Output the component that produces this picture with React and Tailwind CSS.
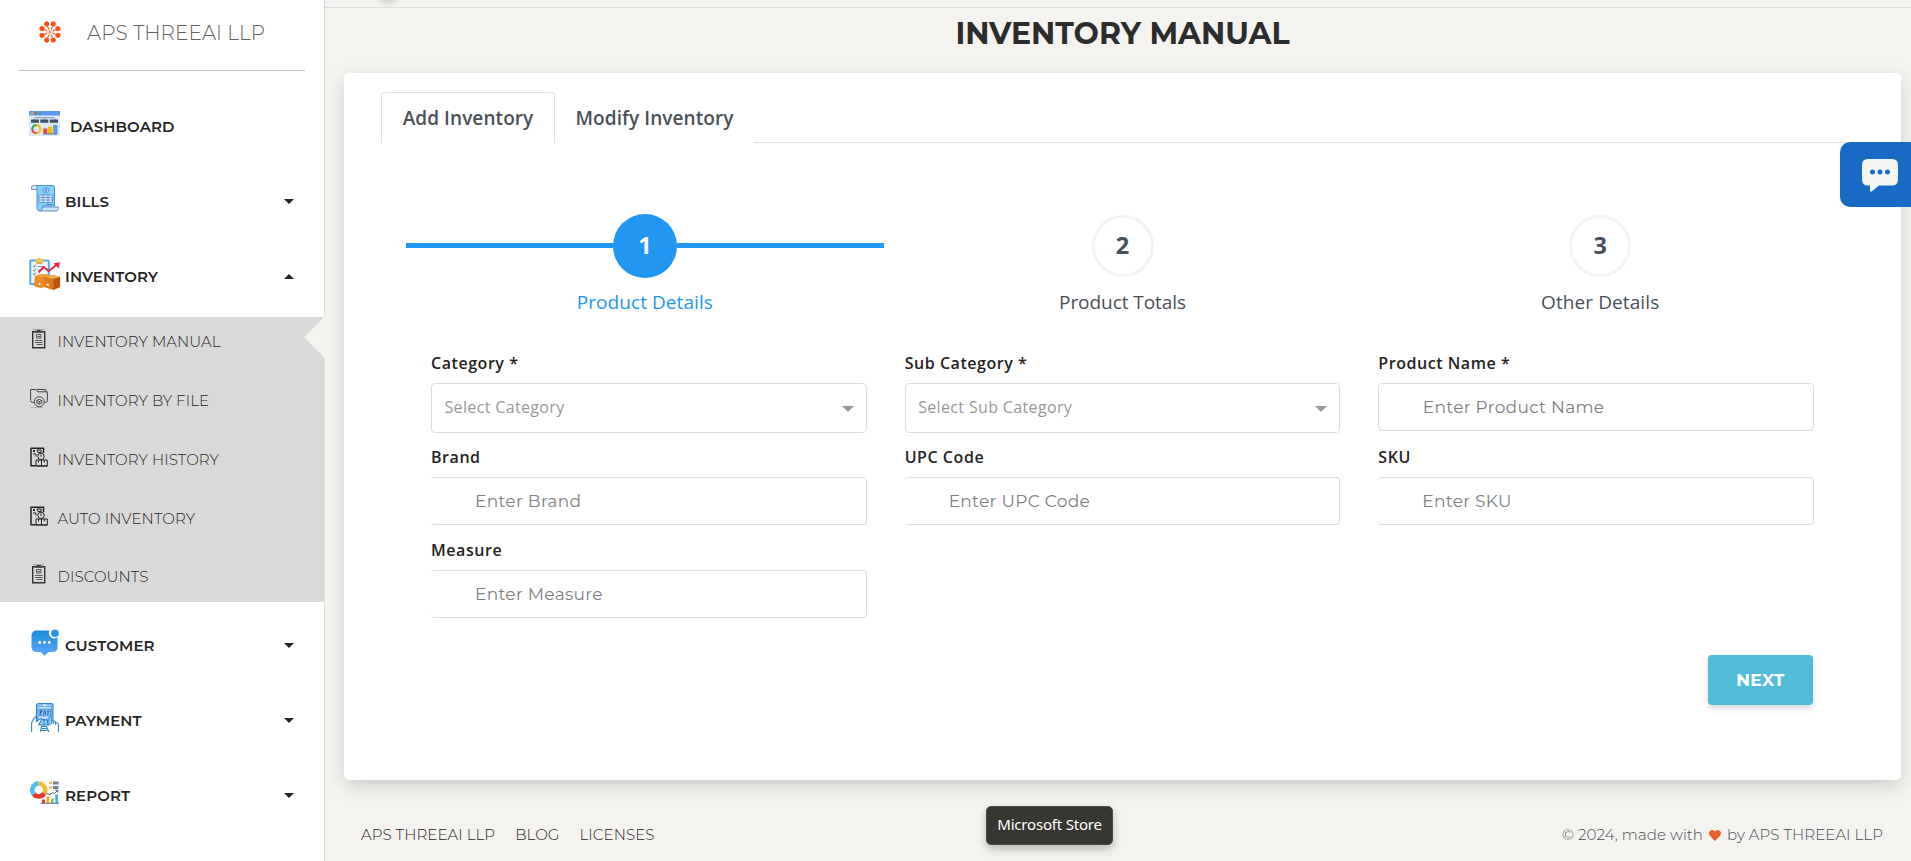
import React from "react";

const MONT = "font-['Montserrat','Inter',sans-serif]";
const TREB = "font-['Trebuchet_MS','Open_Sans',sans-serif]";

function Logo() {
  const dots = [22.5, 67.5, 112.5, 157.5, 202.5, 247.5, 292.5, 337.5];
  return (
    <svg viewBox="-11 -11 22 22" className="size-[22px] shrink-0" fill="#fb4f14" stroke="#fb4f14">
      {dots.map((a) => (
        <g key={a} transform={`rotate(${a})`}>
          <circle cx="8.700" cy="0" r="2.500" stroke="none" />
          <path d="M4.500 0h3" strokeWidth="1" />
          <circle cx="3.900" cy="0" r="0.8" stroke="none" />
        </g>
      ))}
      <circle r="2.100" fill="none" strokeWidth=".8" strokeDasharray="1 .65" />
      <circle r="0.9" stroke="none" />
    </svg>
  );
}

function DashboardIcon() {
  return (
    <svg viewBox="0 0 31 25" className="h-[25px] w-[31px]">
      <path fill="#deebfb" d="M0 0h31v25H0z" />
      <path fill="#5b98ee" d="M0 0h31v4.500H0z" />
      <circle cx="3.300" cy="2.300" r="1.100" fill="#fbbc05" />
      <circle cx="7" cy="2.300" r="1.100" fill="#ea4335" />
      <circle cx="10.700" cy="2.300" r="1.100" fill="#34a853" />
      <path fill="#8fa0ae" d="M6 6h19v1.300H6zM4.500 7.300h1.500v1.500H4.500zM15 7h1v2h-1zM25 7.300h1.500v1.500H25z" />
      <path fill="#3d5263" d="M2 8.500h8v3.300H2zM11.300 8.500h8v3.300h-8zM20.700 8.500h8.300v3.300h-8.300z" />
      <g fill="none" strokeWidth="2.200">
        <path stroke="#fbbc05" d="M7.300 14.200a4 4 0 0 1 4 4" />
        <path stroke="#fbbc05" d="M11.300 18.200a4 4 0 0 1-4 4" />
        <path stroke="#ea4335" d="M7.300 22.200a4 4 0 0 1-4-4" />
        <path stroke="#34a853" d="M3.300 18.200a4 4 0 0 1 4-4" />
      </g>
      <path fill="#ea4335" d="M14.300 17.500h4v5h-4z" />
      <path fill="#fbbc05" d="M19 15.500h4.500v7H19z" />
      <path fill="#5b98ee" d="M24.200 13.800h4.300v8.700h-4.300z" />
      <path fill="#3d5263" d="M14 22.500h14.500v.9H14z" />
    </svg>
  );
}

function BillsIcon() {
  return (
    <svg viewBox="0 0 28 27" className="h-[27px] w-[28px]" strokeLinejoin="round">
      <path fill="#80d4f7" stroke="#4a90d9" d="M4.500.5h17.500q1.500 0 1.500 2V21H12v4.500H8q-2 0-2-2V5z" />
      <path fill="#e3effc" stroke="#5b8fd6" d="M.6 4.500V2.200Q.7.600 2.700.6h2.600q1 .5.700 3.900z" />
      <path fill="#d3e5fa" stroke="#5b8fd6" d="M11.500 22h15.900v1.500q-.2 2.500-2.500 2.500H8.500q3 0 3-4z" />
      <circle cx="14.800" cy="5.300" r="2.900" fill="#a6dcfa" stroke="#4a86cf" strokeWidth=".8" />
      <path stroke="#3f78c4" strokeWidth=".8" d="M14.800 3.500v3.600M13.800 4.500h2M13.800 6h2" />
      <path fill="#dcecfb" stroke="#4a86cf" strokeWidth=".8" d="M7.800 10h13.900v7.600H7.800zM7.800 12.500h13.900M7.800 15h13.900M12.200 10v7.600M17 10v7.600" />
      <path stroke="#4a86cf" d="M15.500 19.500h6" />
    </svg>
  );
}

function InventoryIcon() {
  return (
    <svg viewBox="0 0 31 32" className="h-[32px] w-[31px]">
      <rect x=".3" y="1.500" width="20.500" height="25.500" rx="1.500" fill="#57a9e8" />
      <path fill="#f2f7fc" d="M2.200 3.500h16.600v21.500H2.200z" />
      <path fill="#f3c64e" d="M7 1.500Q10.500-2 14 1.500V5.500H7z" />
      <path fill="#c9952b" d="M8 4.500h5v1.200H8z" />
      <path stroke="#8b98a8" strokeWidth="1.100" d="M4 8l1 1 2-2.300M4 12l1 1 2-2.300M4 16l1 1 2-2.300M8.500 8.500h7M8.500 12h5" fill="none" />
      <path d="M9.500 14.500l5-5.500 5.500 4 8.300-7" fill="none" stroke="#dd2c48" strokeWidth="1.900" />
      <path fill="#dd2c48" d="M24.500 5.500L31 4l-1.500 6.500z" />
      <path fill="#e98a22" d="M6 18l6-2 7 .5v11.500L12 30l-7-2z" />
      <path fill="#f4a73c" d="M6 18l6-2 7 .5-5 2.500z" />
      <path fill="#e07c18" d="M15 18.500l9-1.500 7 2v10L24 32l-9-3z" />
      <path fill="#f6ad48" d="M15 18.500l9-1.500 7 2-6.500 2z" />
      <path fill="#b8560f" d="M24.500 21L31 19v10l-6.500 3z" />
      <path fill="#f5dfc2" d="M9.500 25h2v2h-2zM17.500 25.500l2.500.5v2l-2.500-.500z" />
    </svg>
  );
}

function CustomerIcon() {
  return (
    <svg viewBox="0 0 28 28" className="h-[28px] w-[28px]">
      <defs>
        <linearGradient id="bubble" x1="0" y1="0" x2="0" y2="1">
          <stop offset="0" stopColor="#1c8bdc" />
          <stop offset="1" stopColor="#59a9fb" />
        </linearGradient>
      </defs>
      <path fill="url(#bubble)" d="M6 1.500h12.500a5.500 5.500 0 0 0 8 7V18q0 5-5 5h-4.200L13.500 27l-3.700-4H6q-5.500 0-5.500-5V7Q.5 1.500 6 1.500z" />
      <circle cx="24" cy="4.200" r="3.800" fill="#2a93e6" />
      <g fill="#fff">
        <circle cx="8.700" cy="13.500" r="1.400" />
        <circle cx="13.500" cy="13.500" r="1.400" />
        <circle cx="18.300" cy="13.500" r="1.400" />
      </g>
    </svg>
  );
}

function PaymentIcon() {
  return (
    <svg viewBox="0 0 28 29" className="h-[29px] w-[28px]" fill="none" stroke="#2b87d3" strokeWidth="1.100">
      <path fill="#9cc9f2" d="M5.500 16V2.500Q5.500.600 7.500.6h12.500q2 0 2 1.900V19L18 22H9z" />
      <path fill="#d6e9fb" strokeWidth=".6" d="M7 3.500h13.500V16H7z" />
      <path stroke="#fff" d="M12 2.200h3.500" />
      <path fill="#8cc3f2" strokeWidth=".8" d="M8 6h11.500v7H8z" />
      <path stroke="#1b61a8" strokeWidth=".9" d="M9.500 12V7.500h1.500q.8 1.500-1.500 2.200M12.400 12l1.300-4.500L15 12M15.700 7.500l1.300 2 1.300-2M17 9.500V12" />
      <path fill="#fff" d="M.6 29V21q.4-4.500 4.900-8v6q2-3 4.500-3.500 1 1-1 4l-1.500 3L10.500 24 9.500 29z" stroke="none" />
      <path d="M.6 29V21q.4-4.500 4.900-8v6M5.500 19q2-3 4.500-3.500 1 1-1 4l-1.500 3M10 16.500h3v6M13 17h3.500v5" />
      <path fill="#fff" d="M18 22v-7.500q1.200-1 2 0V20M20 18q1.200-1 2.300 0v3M22.300 18.600q1.200-.8 2.200.3v2.600M24.500 19.600q2.900-.2 2.900 2.400v7" />
      <path d="M9.500 29l1-5.500h5L18 29M10 25.500h6M9.500 27.500h7.500" />
    </svg>
  );
}

function ReportIcon() {
  return (
    <svg viewBox="0 0 29 23" className="h-[23px] w-[29px]">
      <g fill="none" strokeWidth="4.600">
        <path stroke="#f6b93b" d="M8.700 2.500a6.500 6.500 0 0 1 6.500 6.500q0 2-1 3.500" />
        <path stroke="#e5392d" d="M14.200 12.500a6.500 6.500 0 0 1-10.500.5" />
        <path stroke="#4fc1f0" d="M3.700 13a6.500 6.500 0 0 1 5-10.500" />
      </g>
      <path fill="#f6b93b" d="M19.500.5h2.600v2.600h-2.600zM19.500 5h2.600v2.600h-2.600z" />
      <path stroke="#767d99" strokeWidth="1.400" d="M23 1.200h5.500M23 2.800h5.500M23 5.700h5.500M23 7.300h5.500" />
      <path fill="none" stroke="#4b5878" strokeWidth="1" d="M16.500 12.500l3.500 1 2.500-1.700 2 .7 3-3M25.300 9.200h2.400v2.400" />
      <path fill="#e5392d" d="M12 18.500h2.800V22H12z" />
      <path fill="#f6a52d" d="M16.500 15.500h2.800V22h-2.800z" />
      <path fill="#7ac943" d="M21 17.500h2.600V22H21z" />
      <path fill="#3bb4e8" d="M25.300 13.500H28V22h-2.700z" />
      <path fill="#4b5878" d="M10.500 21.800H29v.9H10.500z" />
    </svg>
  );
}

function ClipboardIcon() {
  return (
    <svg viewBox="0 0 17 20" className="h-[20px] w-[17px]" fill="none" stroke="#333">
      <path strokeWidth="1.400" d="M2.700 2.700h12v16.100h-12z" />
      <path stroke="#999" strokeWidth="1" d="M3 .7h11" />
      <path stroke="#444" strokeWidth="1.100" d="M5.800 3.200q.2-1.500 2.900-1.800 2.700.3 2.900 1.800z" />
      <path stroke="#555" strokeWidth="1" d="M6.500 5.500h4.400v3.600H6.500zM7.500 7.500h2.600" />
      <path stroke="#555" strokeWidth="1" d="M4.900 11.500h7.600M4.900 13.500h7.600M6.500 15.500h6" />
    </svg>
  );
}

function FolderIcon() {
  return (
    <svg viewBox="0 0 18 20" className="h-[20px] w-[18px]" fill="none" stroke="#333">
      <path strokeWidth=".9" d="M4 14.500H2.500Q.6 14.300.6 12.500V1.500h5.500l1.500 2.300h9.800v8.700q0 1.800-2 2h-1M7 1.500h8.700v2" />
      <path stroke="#999" strokeWidth=".6" d="M1 19.500h12" />
      <circle cx="9.200" cy="13.700" r="5" strokeWidth=".9" />
      <path strokeWidth=".8" d="M9.200 11.300l2.500 1.200v2.500l-2.500 1.200-2.500-1.200v-2.500zM6.700 12.500l2.500 1.200 2.500-1.200M9.200 13.700v2.500" />
    </svg>
  );
}

function HistoryIcon() {
  return (
    <svg viewBox="0 0 18 20" className="h-[20px] w-[18px]" fill="none" stroke="#222">
      <path strokeWidth="1.500" d="M1 19V1.300M.5 1.300h13V6M.5 18.700H5" />
      <path strokeWidth="1" d="M3 3l2 2M5 3L3 5M3 7h3V9.500M7 3h4v2.500H8z" />
      <circle cx="11" cy="9.300" r="3.200" fill="#d9d9d9" />
      <path d="M11 7.500v2.300M6 19v-6h5.500v6zM11.500 19v-6h5.800v6zM8.500 13v2.500M14.300 13v2.500M5 18.900h12.500" />
    </svg>
  );
}

function Caret({ up }) {
  return (
    <svg viewBox="0 0 10 5" className="h-[5px] w-[10px]" fill="#252422">
      <path d={up ? "M0 5L5 0l5 5z" : "M0 0h10L5 5z"} />
    </svg>
  );
}

function NavItem({ icon, label, caret, gap = "ml-[3px]" }) {
  return (
    <div className="flex h-[75px] shrink-0 items-center pl-[29px] pr-[30px]">
      <div className="flex w-[33px] -translate-y-[3px] items-center">{icon}</div>
      <span className={`${MONT} ${gap} text-[15px] font-semibold leading-5 tracking-[0.120px] text-[#252422]`}>{label}</span>
      <span className="ml-auto">{caret && <Caret up={caret === "up"} />}</span>
    </div>
  );
}

function SubItem({ icon, label }) {
  return (
    <div className="flex h-[59px] items-center pl-[30px]">
      <div className="flex w-[27.500px] -translate-y-[3px]">{icon}</div>
      <span className={`${MONT} text-[15px] font-light leading-5 tracking-[0.090px] text-[#252422]`}>{label}</span>
    </div>
  );
}

function Sidebar() {
  return (
    <aside className="relative flex h-full w-[325px] shrink-0 flex-col border-r border-[#dddddd] bg-white">
      <div className="mx-[19px] flex h-[71px] shrink-0 items-center border-b border-[#bfbfbf] pb-[6px] pl-[20px]">
        <Logo />
        <span className={`${MONT} ml-[26px] pt-[2px] text-[20px] font-light leading-6 tracking-[0.060px] text-[#66615b]`}>APS THREEAI LLP</span>
      </div>
      <div className="h-[18px] shrink-0" />
      <NavItem icon={<DashboardIcon />} label="DASHBOARD" gap="ml-[8px]" />
      <NavItem icon={<span className="ml-[2px]"><BillsIcon /></span>} label="BILLS" caret="down" />
      <NavItem icon={<InventoryIcon />} label="INVENTORY" caret="up" />
      <div className="mt-[3px] h-[285px] shrink-0 bg-[#d9d9d9]">
        <div className="-translate-y-[5px]">
          <SubItem icon={<ClipboardIcon />} label="INVENTORY MANUAL" />
          <SubItem icon={<FolderIcon />} label="INVENTORY BY FILE" />
          <SubItem icon={<HistoryIcon />} label="INVENTORY HISTORY" />
          <SubItem icon={<HistoryIcon />} label="AUTO INVENTORY" />
          <div className="-translate-y-px">
            <SubItem icon={<ClipboardIcon />} label="DISCOUNTS" />
          </div>
        </div>
      </div>
      <div className="h-[6px] shrink-0" />
      <NavItem icon={<span className="ml-[2px]"><CustomerIcon /></span>} label="CUSTOMER" caret="down" />
      <NavItem icon={<span className="ml-[2px]"><PaymentIcon /></span>} label="PAYMENT" caret="down" />
      <NavItem icon={<span className="ml-[1px]"><ReportIcon /></span>} label="REPORT" caret="down" />
      <svg viewBox="0 0 21 42" className="absolute -right-px top-[316px] h-[42px] w-[21px]">
        <path fill="#f4f3ef" d="M21 0v42L0 21z" />
      </svg>
    </aside>
  );
}

function Step({ n, label, active, tracking }) {
  return (
    <div className="flex flex-1 flex-col items-center">
      <div className="flex h-[64px] w-full items-center">
        <div className={`mb-px h-[5px] flex-1 ${active ? "bg-[#2196f3]" : ""}`} />
        <div className={`${TREB} flex items-center justify-center rounded-full pb-px text-[23.500px] font-bold leading-none ${active ? "size-[64px] bg-[#2196f3] text-white" : "size-[62px] border-[3px] border-[#f4f3ef] text-[#495057]"}`}>{n}</div>
        <div className={`mb-px h-[5px] flex-1 ${active ? "bg-[#2196f3]" : ""}`} />
      </div>
      <div className={`${TREB} ${tracking} mt-[11px] text-[19px] leading-[26px] ${active ? "text-[#2196f3]" : "text-[#495057]"}`}>{label}</div>
    </div>
  );
}

function Label({ children }) {
  return <div className={`${TREB} h-[20px] text-[16px] font-semibold leading-[20px] tracking-[0.550px] text-[#252422]`}>{children}</div>;
}

function SelectField({ label, placeholder }) {
  return (
    <div>
      <Label>{label}</Label>
      <div className="mt-[10px] flex h-[50px] items-center justify-between rounded-[4px] border border-[#dddddd] pb-[2px] pl-[12.500px] pr-[12px]">
        <span className={`${TREB} text-[16px] font-medium leading-5 tracking-[0.350px] text-[#999999]`}>{placeholder}</span>
        <svg viewBox="0 0 12 6" className="mt-[4px] h-[6px] w-[12px]" fill="#999999"><path d="M0 0h12L6 6z" /></svg>
      </div>
    </div>
  );
}

function TextField({ label, placeholder, full }) {
  return (
    <div>
      <Label>{label}</Label>
      <div className={`mt-[10px] flex h-[48px] items-center rounded-[4px] border border-[#dddddd] ${full ? "pb-px pl-[43.500px]" : "border-l-0 pl-[44px]"}`}>
        <span className={`${MONT} text-[17px] font-normal leading-5 tracking-[0.300px] text-[#808080]`}>{placeholder}</span>
      </div>
    </div>
  );
}

function Card() {
  return (
    <section className="ml-[19px] mr-[10px] h-[707px] shrink-0 rounded-[5px] bg-white px-[37px] pt-[19px] shadow-[0_6px_20px_-2px_rgba(37,36,34,0.22)]">
      <div className="flex h-[51px] items-stretch">
        <div className={`${TREB} flex w-[174px] items-center justify-center rounded-t-[4px] border border-b-0 border-[#dee2e6] text-[19px] font-semibold tracking-[0.080px] text-[#495057]`}>Add Inventory</div>
        <div className={`${TREB} flex w-[199px] items-center justify-center pt-px text-[19px] font-semibold tracking-[0.080px] text-[#495057]`}>Modify Inventory</div>
        <div className="flex-1 border-b border-[#dee2e6]" />
      </div>
      <div className="mt-[71px] -mr-[1px] flex pl-[25px] pr-[26px]">
        <Step n="1" label="Product Details" active tracking="tracking-[0.080px]" />
        <Step n="2" label="Product Totals" tracking="tracking-[-0.060px]" />
        <Step n="3" label="Other Details" tracking="tracking-[0.100px]" />
      </div>
      <div className="mt-[38px] grid h-[281px] grid-cols-3 grid-rows-[94px_93px_94px] gap-x-[38px] pl-[50px] pr-[50px]">
        <SelectField label="Category *" placeholder="Select Category" />
        <SelectField label="Sub Category *" placeholder="Select Sub Category" />
        <TextField label="Product Name *" placeholder="Enter Product Name" full />
        <TextField label="Brand" placeholder="Enter Brand" />
        <TextField label="UPC Code" placeholder="Enter UPC Code" />
        <TextField label="SKU" placeholder="Enter SKU" />
        <TextField label="Measure" placeholder="Enter Measure" />
      </div>
      <div className="mt-[21px] flex justify-end pr-[51px]">
        <button className={`${MONT} h-[50px] w-[105px] rounded-[4px] bg-[#51bcda] pt-[2px] text-[17px] font-bold tracking-[0.300px] text-white shadow-[0_3px_6px_rgba(50,50,93,0.2)]`}>NEXT</button>
      </div>
    </section>
  );
}

export default function App() {
  return (
    <div className="relative flex h-[861px] w-[1911px] overflow-hidden bg-[#f4f3ef]">
      <Sidebar />
      <main className="flex min-w-0 flex-1 flex-col">
        <header className="relative h-[8px] shrink-0 overflow-hidden border-b border-[#dddddd]">
          <div className="absolute -top-[28px] left-[50px] size-[26px] rounded-full bg-[#66615b] shadow-[0_2px_8px_rgba(0,0,0,0.3)]" />
        </header>
        <h1 className={`${MONT} h-[65px] shrink-0 pl-[9px] pt-[6px] text-center text-[30px] font-bold leading-[40px] text-[#2c2c2c]`}>INVENTORY MANUAL</h1>
        <Card />
        <footer className={`${MONT} mt-[43px] flex h-[24px] items-center pl-[36px] pr-[28px] text-[15px] font-light leading-6 tracking-[0.080px] text-[#252422]`}>
          <nav className="flex gap-[20px]">
            <span>APS THREEAI LLP</span>
            <span>BLOG</span>
            <span>LICENSES</span>
          </nav>
          <div className="ml-auto flex items-center text-[#444b52]">
            <span>© 2024, made with</span>
            <svg viewBox="0 0 12 11" className="mx-[6px] h-[11px] w-[12px]" fill="#eb5e28"><path d="M6 11L.9 5.700C-.5 4-.2 1.500 1.600.5 3.200-.4 5 .1 6 1.600 7-.1 8.800-.4 10.400.5c1.800 1 2.100 3.500.7 5.200z" /></svg>
            <span>by APS THREEAI LLP</span>
          </div>
        </footer>
      </main>
      <div className="absolute right-0 top-[142px] flex h-[65px] w-[71px] items-start rounded-l-[10px] bg-[#196ac5] pl-[22px] pt-[17px]">
        <svg viewBox="0 0 36 33" className="h-[33px] w-[36px]">
          <path fill="#f5f5f5" d="M6 0h24q6 0 6 6v14.500q0 6-6 6H17L9.500 32.500q-1.500.5-1.500-1v-5H6q-6 0-6-6V6q0-6 6-6z" />
          <g fill="#196ac5"><circle cx="10.500" cy="13" r="2.500" /><circle cx="18" cy="13" r="2.500" /><circle cx="25.500" cy="13" r="2.500" /></g>
        </svg>
      </div>
      <div className="absolute left-[986px] top-[806px] flex h-[39px] w-[127px] items-center justify-center rounded-[5px] border border-[#4b4a45] bg-[#373631] pb-[2px] font-['Segoe_UI','Noto_Sans',sans-serif] text-[15px] tracking-[-0.200px] text-white shadow-[0_4px_8px_rgba(0,0,0,0.25)]">Microsoft Store</div>
    </div>
  );
}
